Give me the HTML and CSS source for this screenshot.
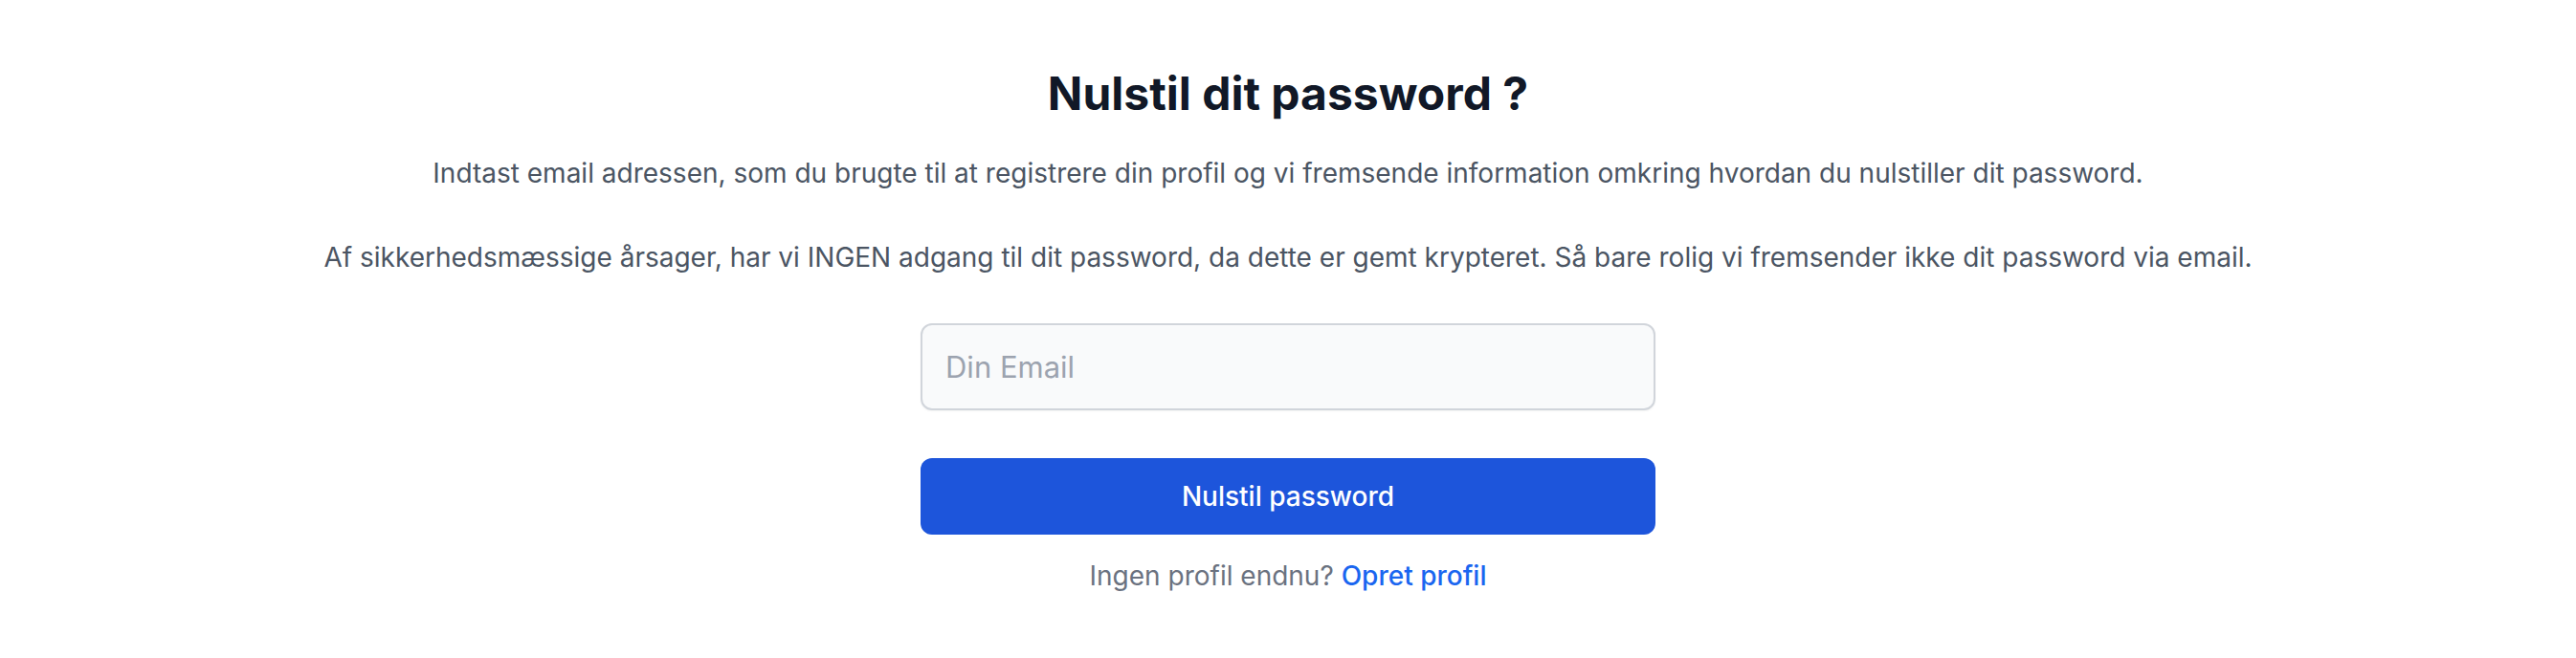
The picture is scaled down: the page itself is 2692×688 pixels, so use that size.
FILE: index.html
```html
<!DOCTYPE html>
<html lang="da">
<head>
<meta charset="utf-8">
<title>Nulstil dit password</title>
<link rel="stylesheet" href="styles.css">
</head>
<body>
<main class="page">
  <h1 class="title">Nulstil dit password ?</h1>
  <p class="lead">Indtast email adressen, som du brugte til at registrere din profil og vi fremsende information omkring hvordan du nulstiller dit password.</p>
  <p class="lead">Af sikkerhedsmæssige årsager, har vi INGEN adgang til dit password, da dette er gemt krypteret. Så bare rolig vi fremsender ikke dit password via email.</p>
  <form class="form">
    <input class="input" type="email" placeholder="Din Email">
    <button class="button" type="button">Nulstil password</button>
    <p class="footer">Ingen profil endnu? <a class="link" href="#">Opret profil</a></p>
  </form>
</main>
</body>
</html>
```
FILE: styles.css
```css
html, body {
  margin: 0;
  padding: 0;
  background: #ffffff;
}
body {
  font-family: Inter, "Noto Sans", sans-serif;
}
.page {
  display: flex;
  flex-direction: column;
  align-items: center;
  padding-top: 69px;
}
.title {
  margin: 0;
  font-size: 48px;
  line-height: 58px;
  font-weight: 700;
  color: #111827;
}
.lead {
  margin: 33px 0 0;
  font-size: 28px;
  line-height: 42px;
  color: #4b5563;
  text-align: center;
}
.lead + .lead {
  margin-top: 46px;
}
.form {
  width: 768px;
  margin-top: 48px;
  display: flex;
  flex-direction: column;
}
.input {
  box-sizing: border-box;
  height: 91px;
  padding: 0 24px;
  border: 2px solid #d1d5db;
  border-radius: 12px;
  background: #f9fafb;
  font-family: inherit;
  font-size: 31px;
  color: #111827;
  outline: none;
  box-shadow: 0 1px 2px rgba(0,0,0,0.05);
}
.input::placeholder {
  color: #9ca3af;
}
.button {
  margin-top: 50px;
  height: 80px;
  border: none;
  border-radius: 12px;
  background: #1d55db;
  color: #ffffff;
  font-family: inherit;
  font-size: 28px;
  font-weight: 500;
  cursor: pointer;
}
.footer {
  margin: 22px 0 0;
  font-size: 28px;
  line-height: 42px;
  color: #6b7280;
  text-align: center;
}
.link {
  color: #1a66f0;
  font-weight: 500;
  text-decoration: none;
}
```
